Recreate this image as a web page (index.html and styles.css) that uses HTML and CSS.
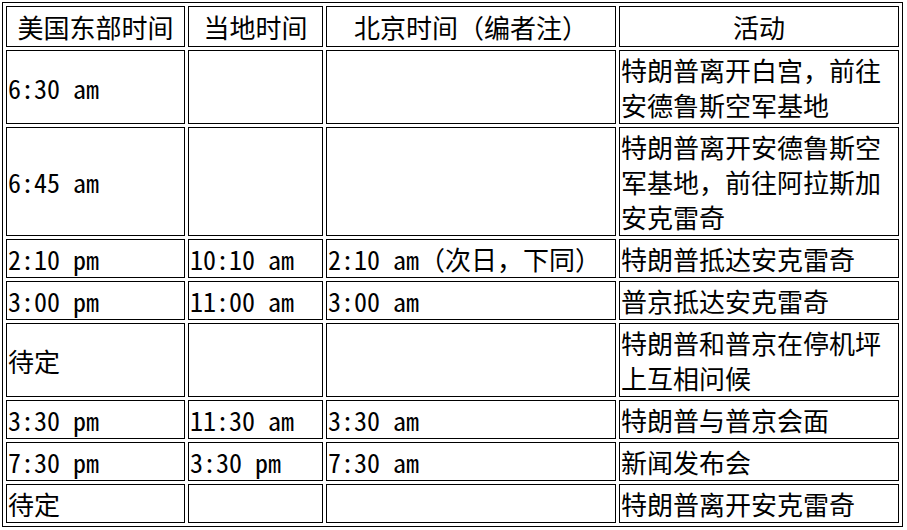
FILE: index.html
```
<!DOCTYPE html>
<html lang="zh-CN">
<head>
<meta charset="utf-8">
<title>日程</title>
<link rel="stylesheet" href="styles.css">
</head>
<body>
<table class="schedule">
<colgroup>
<col class="c1"><col class="c2"><col class="c3"><col class="c4">
</colgroup>
<thead>
<tr><th>美国东部时间</th><th>当地时间</th><th>北京时间（编者注）</th><th>活动</th></tr>
</thead>
<tbody>
<tr><td>6:30 am</td><td></td><td></td><td>特朗普离开白宫，前往安德鲁斯空军基地</td></tr>
<tr><td>6:45 am</td><td></td><td></td><td>特朗普离开安德鲁斯空军基地，前往阿拉斯加安克雷奇</td></tr>
<tr><td>2:10 pm</td><td>10:10 am</td><td>2:10 am（次日，下同）</td><td>特朗普抵达安克雷奇</td></tr>
<tr><td>3:00 pm</td><td>11:00 am</td><td>3:00 am</td><td>普京抵达安克雷奇</td></tr>
<tr><td>待定</td><td></td><td></td><td>特朗普和普京在停机坪上互相问候</td></tr>
<tr><td>3:30 pm</td><td>11:30 am</td><td>3:30 am</td><td>特朗普与普京会面</td></tr>
<tr><td>7:30 pm</td><td>3:30 pm</td><td>7:30 am</td><td>新闻发布会</td></tr>
<tr><td>待定</td><td></td><td></td><td>特朗普离开安克雷奇</td></tr>
</tbody>
</table>
</body>
</html>
```
FILE: styles.css
```
html, body {
  margin: 0;
  padding: 0;
  background: #fff;
}
body {
  padding: 2px;
  font-family: "Noto Sans Mono CJK SC", "Noto Sans CJK SC", monospace;
  font-size: 26px;
  font-weight: 300;
  color: #000;
}
.schedule {
  border: 1px solid #000;
  border-spacing: 3px;
  table-layout: fixed;
  width: 901px;
}
.c1 { width: 179px; }
.c2 { width: 135px; }
.c3 { width: 290px; }
.c4 { width: 280px; }
.schedule th,
.schedule td {
  border: 1px solid #000;
  padding: 1px;
  line-height: 35px;
  vertical-align: middle;
  box-sizing: border-box;
}
.schedule th {
  text-align: center;
  font-weight: 400;
  padding: 2px 1px;
}
.schedule td {
  text-align: left;
}
```
